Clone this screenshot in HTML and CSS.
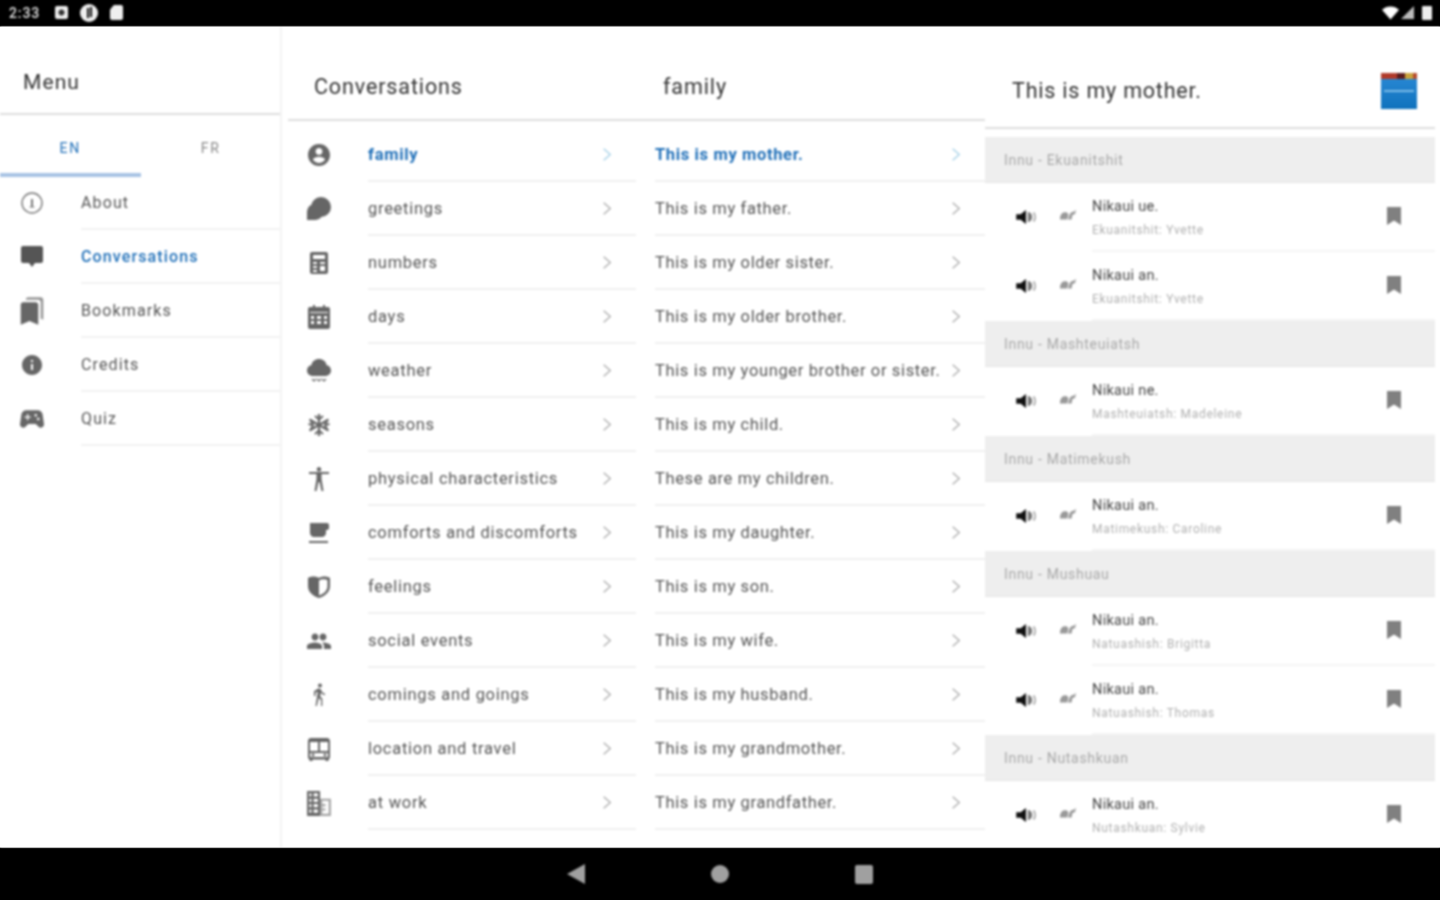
FILE: index.html
```html
<!DOCTYPE html>
<html lang="en">
<head>
<meta charset="utf-8">
<title>Innu Conversations</title>
<link rel="stylesheet" href="styles.css">
</head>
<body>
<svg class="defs" width="0" height="0" aria-hidden="true">
  <defs>
    <symbol id="i-about" viewBox="0 0 24 24"><circle cx="12" cy="12" r="10" fill="none" stroke="currentColor" stroke-width="1.4"/><path d="M11 8h2v8h-2zM9.500 15.500h5v1h-5z"/></symbol>
    <symbol id="i-chat" viewBox="0 0 24 24"><path d="M3 1h18c1.100 0 2 .9 2 2v13c0 1.100-.9 2-2 2h-6l-3 4-3-4H3c-1.100 0-2-.9-2-2V3c0-1.100.9-2 2-2z"/></symbol>
    <symbol id="i-bookmarks" viewBox="0 0 24 24"><path d="M19 18l2 1V3c0-1.100-.9-2-2-2H8.990C7.890 1 7 1.900 7 3h10c1.100 0 2 .9 2 2v13z" opacity=".7"/><path d="M15 5H5c-1.100 0-2 .9-2 2v16l7-3 7 3V7c0-1.100-.9-2-2-2z"/></symbol>
    <symbol id="i-info" viewBox="0 0 24 24"><path d="M12 2C6.480 2 2 6.480 2 12s4.480 10 10 10 10-4.480 10-10S17.520 2 12 2zm1 15h-2v-6h2v6zm0-8h-2V7h2v2z"/></symbol>
    <symbol id="i-game" viewBox="0 0 24 24"><path d="M21.580 16.090l-1.090-7.660C20.210 6.460 18.520 5 16.530 5H7.470C5.480 5 3.790 6.460 3.510 8.430l-1.090 7.660C2.200 17.630 3.390 19 4.940 19c.68 0 1.320-.27 1.800-.75L9 16h6l2.250 2.250c.48.48 1.130.75 1.800.75 1.560 0 2.750-1.370 2.530-2.910zM11 11H9v2H8v-2H6v-1h2V8h1v2h2v1zm4-1c-.55 0-1-.45-1-1s.45-1 1-1 1 .45 1 1-.45 1-1 1zm2 3c-.55 0-1-.45-1-1s.45-1 1-1 1 .45 1 1-.45 1-1 1z"/></symbol>
    <symbol id="i-account" viewBox="0 0 24 24"><path d="M12 1C5.900 1 1 5.900 1 12s4.900 11 11 11 11-4.900 11-11S18.100 1 12 1zm0 4c1.900 0 3.400 1.500 3.400 3.400s-1.500 3.400-3.400 3.400-3.400-1.500-3.400-3.400S10.100 5 12 5zm0 15c-2.500 0-4.710-1.280-6-3.220.03-1.990 4-3.080 6-3.080 1.990 0 5.970 1.090 6 3.080-1.290 1.940-3.500 3.220-6 3.220z"/></symbol>
    <symbol id="i-greet" viewBox="0 0 24 24"><circle cx="14" cy="10" r="10"/><path d="M0 23v-8c0-4.400 3.600-8 8-8s8 3.600 8 8-3.600 8-8 8H0z"/></symbol>
    <symbol id="i-calc" viewBox="0 0 24 24"><path d="M5 1h14c1.100 0 2 .9 2 2v18c0 1.100-.9 2-2 2H5c-1.100 0-2-.9-2-2V3c0-1.100.9-2 2-2zm1 3v4h12V4H6zm0 7v2h4v-2H6zm7 0v2h5v-2h-5zm-7 4v2h4v-2H6zm7 0v5h5v-5h-5zm-7 4v2h4v-2H6z"/></symbol>
    <symbol id="i-cal" viewBox="0 0 24 24"><path d="M6 0h2v2h8V0h2v2h3c1.100 0 2 .9 2 2v18c0 1.100-.9 2-2 2H3c-1.100 0-2-.9-2-2V4c0-1.100.9-2 2-2h3V0zM3 7v1h18V7H3zm1 4v3h3v-3H4zm6 0v3h4v-3h-4zm7 0v3h3v-3h-3zM4 16v3h3v-3H4zm6 0v3h4v-3h-4zm7 0v3h3v-3h-3z"/></symbol>
    <symbol id="i-weather" viewBox="0 0 24 24"><path d="M12 0C8 0 5 2.500 4.500 6 2 6.500 0 8.500 0 11.500 0 14.500 2.500 17 6 17h12c3.500 0 6-2.500 6-5.500 0-3-2-5-4.500-5.500C19 2.500 16 0 12 0z"/><path d="M5 20l2 2 2-2M10 20l2 2 2-2M15 20l2 2 2-2" fill="none" stroke="currentColor" stroke-width="1.200"/></symbol>
    <symbol id="i-snow" viewBox="0 0 24 24"><path d="M12 1v22M2.500 6.500l19 11M21.500 6.500l-19 11" fill="none" stroke="currentColor" stroke-width="2.200"/><path d="M8 3l4 3.500L16 3M8 21l4-3.500 4 3.500M1.500 11l4.500 1-2 4.500M22.500 11L18 12l2 4.500M4 7.500L6 12M20 7.500L18 12" fill="none" stroke="currentColor" stroke-width="2"/></symbol>
    <symbol id="i-body" viewBox="0 0 24 24"><path d="M12 0c1.300 0 2.300 1 2.300 2.300S13.300 4.600 12 4.600 9.700 3.600 9.700 2.300 10.700 0 12 0zm10 7h-7.500v5l2 12h-2l-2-9h-1l-2 9h-2l2-12V7H2V5h20v2z"/></symbol>
    <symbol id="i-cafe" viewBox="0 0 24 24"><path d="M20 2H3v10c0 2.210 1.790 4 4 4h8c2.210 0 4-1.790 4-4V9h1c1.110 0 2-.9 2-2V4c0-1.110-.89-2-2-2zM2 20h19v2H2z"/></symbol>
    <symbol id="i-shield" viewBox="0 0 24 24"><path d="M12 3C9 1 4 1 1 3v8c0 6 5 10 11 12 6-2 11-6 11-12V3c-3-2-8-2-11 0zm0 2.500c2-1.300 6-1.500 8.500-.5v6c0 4.500-3.700 8-8.500 9.500v-15z"/></symbol>
    <symbol id="i-people" viewBox="0 0 24 24"><path d="M16 11.500c1.900 0 3.400-1.500 3.400-3.500S17.900 4.500 16 4.500 12.600 6 12.600 8s1.500 3.500 3.400 3.500zm-8 0c1.900 0 3.400-1.500 3.400-3.500S9.900 4.500 8 4.500 4.600 6 4.600 8s1.500 3.500 3.400 3.500zm0 2c-2.330 0-8 1.170-8 3.500V20h15v-3c0-2.330-4.670-3.500-7-3.500zm8 0c-.29 0-.62.02-.97.05 1.160.84 1.970 1.970 1.970 3.450v3h7v-3c0-2.330-5.670-3.500-8-3.500z"/></symbol>
    <symbol id="i-walk" viewBox="0 0 24 24"><path d="M13 4.500c1.100 0 2-.9 2-2s-.9-2-2-2-2 .9-2 2 .9 2 2 2zM10.800 8.900L8.500 23h1.300l2.100-8 2.100 2v6h1.300v-7.500l-2.100-2 .6-4c.9 1.500 2.200 2.500 4.200 2.500v-1.500c-1.900 0-2.600-1-3.300-2.400l-1-1.600c-.4-.6-1-1-1.700-1-.3 0-.5.1-.8.1L7 8.300V13h1.500V9.600l2.300-.7z"/></symbol>
    <symbol id="i-bus" viewBox="0 0 24 24"><path d="M1 4c0-2 1.500-3 3-3h16c1.500 0 3 1 3 3v16c0 1.200-.6 2-1.500 2.400V24h-3v-1.400h-13V24h-3v-1.600C1.600 22 1 21.200 1 20V4zm2 1v9h8V5H3zm10 0v9h8V5h-8zM3 16v4h18v-4H3zm3 .6c.8 0 1.500.6 1.500 1.400s-.7 1.400-1.500 1.400-1.500-.6-1.500-1.400.7-1.400 1.500-1.400zm12 0c.8 0 1.500.6 1.500 1.400s-.7 1.400-1.500 1.400-1.500-.6-1.500-1.400.7-1.400 1.500-1.400z"/></symbol>
    <symbol id="i-work" viewBox="0 0 24 24"><path d="M13 8V1H1v23h12V8zM5 21H3v-3h2v3zm0-5H3v-3h2v3zm0-5H3V8h2v3zm0-5H3V3h2v3zm6 15H7v-3h4v3zm0-5H7v-3h4v3zm0-5H7V8h4v3zm0-5H7V3h4v3z"/><path d="M13 8v16h10V8H13zm8 14h-6v-3h3v-2h-3v-2h3v-2h-3v-3h6v12z" opacity=".6"/></symbol>
    <symbol id="i-chev" viewBox="0 0 12 16"><path d="M2 1l8 7-8 7" fill="none" stroke="currentColor" stroke-width="1.500"/></symbol>
    <symbol id="i-vol" viewBox="0 0 24 18"><path d="M1 6v6h5l6 5V1L6 6H1z" fill="#111"/><path d="M14 3c3.500 1 5 3.200 5 6s-1.500 5-5 6z" fill="#777"/><path d="M20.500 4c1.200 1.500 1.800 3.200 1.800 5s-.6 3.500-1.800 5" fill="none" stroke="#999" stroke-width="1.600"/></symbol>
    <symbol id="i-slow" viewBox="0 0 18 12"><path d="M0 11c0-5 2-8 6-8 3 0 4 2 3 5l-1 3H0zm9 0l2-6c1-2 3-3 5-3l2-2-1 5-3 1-1 5H9z"/></symbol>
    <symbol id="i-mark" viewBox="0 0 14 18"><path d="M0 0h14v18l-7-4.500L0 18z"/></symbol>
  </defs>
</svg>
<div class="device">
  <header class="statusbar">
    <div class="status-left">
      <span class="clock">2:33</span>
      <span class="st-square"></span>
      <span class="st-circle"></span>
      <span class="st-card"></span>
    </div>
    <div class="status-right">
      <svg class="st-wifi" viewBox="0 0 18 14"><path d="M0 3.500C2.500 1.300 5.500 0 9 0s6.500 1.300 9 3.500L9 14z"/></svg>
      <svg class="st-signal" viewBox="0 0 14 14"><path d="M14 0v14H0z"/></svg>
      <span class="st-battery"></span>
    </div>
  </header>
  <main class="screen">
    <nav class="menu">
      <h1 class="menu-title">Menu</h1>
      <div class="tabs"><span class="tab tab-on">EN</span><span class="tab">FR</span></div>
      <ul class="menu-list">
        <li class="menu-row"><svg class="ic ic-about"><use href="#i-about"/></svg><span class="menu-label">About</span></li>
        <li class="menu-row"><svg class="ic ic-chat"><use href="#i-chat"/></svg><span class="menu-label label-on">Conversations</span></li>
        <li class="menu-row"><svg class="ic ic-xl"><use href="#i-bookmarks"/></svg><span class="menu-label">Bookmarks</span></li>
        <li class="menu-row"><svg class="ic"><use href="#i-info"/></svg><span class="menu-label">Credits</span></li>
        <li class="menu-row"><svg class="ic ic-xl"><use href="#i-game"/></svg><span class="menu-label">Quiz</span></li>
      </ul>
    </nav>
    <section class="lists">
      <div class="list-head"><h2 class="list-title list-title-a">Conversations</h2><h2 class="list-title list-title-b">family</h2></div>
      <div class="columns">
        <ul class="col col-a">
          <li class="row"><svg class="ic"><use href="#i-account"/></svg><span class="row-body on">family<svg class="chev chev-on"><use href="#i-chev"/></svg></span></li>
          <li class="row"><svg class="ic"><use href="#i-greet"/></svg><span class="row-body">greetings<svg class="chev"><use href="#i-chev"/></svg></span></li>
          <li class="row"><svg class="ic"><use href="#i-calc"/></svg><span class="row-body">numbers<svg class="chev"><use href="#i-chev"/></svg></span></li>
          <li class="row"><svg class="ic"><use href="#i-cal"/></svg><span class="row-body">days<svg class="chev"><use href="#i-chev"/></svg></span></li>
          <li class="row"><svg class="ic"><use href="#i-weather"/></svg><span class="row-body">weather<svg class="chev"><use href="#i-chev"/></svg></span></li>
          <li class="row"><svg class="ic"><use href="#i-snow"/></svg><span class="row-body">seasons<svg class="chev"><use href="#i-chev"/></svg></span></li>
          <li class="row"><svg class="ic"><use href="#i-body"/></svg><span class="row-body">physical characteristics<svg class="chev"><use href="#i-chev"/></svg></span></li>
          <li class="row"><svg class="ic"><use href="#i-cafe"/></svg><span class="row-body">comforts and discomforts<svg class="chev"><use href="#i-chev"/></svg></span></li>
          <li class="row"><svg class="ic"><use href="#i-shield"/></svg><span class="row-body">feelings<svg class="chev"><use href="#i-chev"/></svg></span></li>
          <li class="row"><svg class="ic"><use href="#i-people"/></svg><span class="row-body">social events<svg class="chev"><use href="#i-chev"/></svg></span></li>
          <li class="row"><svg class="ic"><use href="#i-walk"/></svg><span class="row-body">comings and goings<svg class="chev"><use href="#i-chev"/></svg></span></li>
          <li class="row"><svg class="ic"><use href="#i-bus"/></svg><span class="row-body">location and travel<svg class="chev"><use href="#i-chev"/></svg></span></li>
          <li class="row"><svg class="ic ic-lg"><use href="#i-work"/></svg><span class="row-body">at work<svg class="chev"><use href="#i-chev"/></svg></span></li>
        </ul>
        <ul class="col col-b">
          <li class="row"><span class="row-body on">This is my mother.<svg class="chev chev-on"><use href="#i-chev"/></svg></span></li>
          <li class="row"><span class="row-body">This is my father.<svg class="chev"><use href="#i-chev"/></svg></span></li>
          <li class="row"><span class="row-body">This is my older sister.<svg class="chev"><use href="#i-chev"/></svg></span></li>
          <li class="row"><span class="row-body">This is my older brother.<svg class="chev"><use href="#i-chev"/></svg></span></li>
          <li class="row"><span class="row-body">This is my younger brother or sister.<svg class="chev"><use href="#i-chev"/></svg></span></li>
          <li class="row"><span class="row-body">This is my child.<svg class="chev"><use href="#i-chev"/></svg></span></li>
          <li class="row"><span class="row-body">These are my children.<svg class="chev"><use href="#i-chev"/></svg></span></li>
          <li class="row"><span class="row-body">This is my daughter.<svg class="chev"><use href="#i-chev"/></svg></span></li>
          <li class="row"><span class="row-body">This is my son.<svg class="chev"><use href="#i-chev"/></svg></span></li>
          <li class="row"><span class="row-body">This is my wife.<svg class="chev"><use href="#i-chev"/></svg></span></li>
          <li class="row"><span class="row-body">This is my husband.<svg class="chev"><use href="#i-chev"/></svg></span></li>
          <li class="row"><span class="row-body">This is my grandmother.<svg class="chev"><use href="#i-chev"/></svg></span></li>
          <li class="row"><span class="row-body">This is my grandfather.<svg class="chev"><use href="#i-chev"/></svg></span></li>
        </ul>
      </div>
    </section>
    <section class="detail">
      <div class="detail-head">
        <h2 class="detail-title">This is my mother.</h2>
        <div class="book">
          <div class="book-top"><i class="bt-a"></i><i class="bt-b"></i><i class="bt-c"></i><i class="bt-d"></i></div>
          <div class="book-line"></div>
        </div>
      </div>
      <div class="detail-body">
        <h3 class="group">Innu - Ekuanitshit</h3>
        <div class="say"><svg class="vol"><use href="#i-vol"/></svg><svg class="slow"><use href="#i-slow"/></svg><div class="say-text"><p class="say-main">Nikaui ue.</p><p class="say-sub">Ekuanitshit: Yvette</p></div><svg class="mark"><use href="#i-mark"/></svg></div>
        <div class="say"><svg class="vol"><use href="#i-vol"/></svg><svg class="slow"><use href="#i-slow"/></svg><div class="say-text"><p class="say-main">Nikaui an.</p><p class="say-sub">Ekuanitshit: Yvette</p></div><svg class="mark"><use href="#i-mark"/></svg></div>
        <h3 class="group">Innu - Mashteuiatsh</h3>
        <div class="say"><svg class="vol"><use href="#i-vol"/></svg><svg class="slow"><use href="#i-slow"/></svg><div class="say-text"><p class="say-main">Nikaui ne.</p><p class="say-sub">Mashteuiatsh: Madeleine</p></div><svg class="mark"><use href="#i-mark"/></svg></div>
        <h3 class="group">Innu - Matimekush</h3>
        <div class="say"><svg class="vol"><use href="#i-vol"/></svg><svg class="slow"><use href="#i-slow"/></svg><div class="say-text"><p class="say-main">Nikaui an.</p><p class="say-sub">Matimekush: Caroline</p></div><svg class="mark"><use href="#i-mark"/></svg></div>
        <h3 class="group">Innu - Mushuau</h3>
        <div class="say"><svg class="vol"><use href="#i-vol"/></svg><svg class="slow"><use href="#i-slow"/></svg><div class="say-text"><p class="say-main">Nikaui an.</p><p class="say-sub">Natuashish: Brigitta</p></div><svg class="mark"><use href="#i-mark"/></svg></div>
        <div class="say"><svg class="vol"><use href="#i-vol"/></svg><svg class="slow"><use href="#i-slow"/></svg><div class="say-text"><p class="say-main">Nikaui an.</p><p class="say-sub">Natuashish: Thomas</p></div><svg class="mark"><use href="#i-mark"/></svg></div>
        <h3 class="group">Innu - Nutashkuan</h3>
        <div class="say"><svg class="vol"><use href="#i-vol"/></svg><svg class="slow"><use href="#i-slow"/></svg><div class="say-text"><p class="say-main">Nikaui an.</p><p class="say-sub">Nutashkuan: Sylvie</p></div><svg class="mark"><use href="#i-mark"/></svg></div>
      </div>
    </section>
  </main>
  <footer class="navbar">
    <svg class="nav-back" viewBox="0 0 18 20"><path d="M0 10L18 0v20z"/></svg>
    <span class="nav-home"></span>
    <span class="nav-recent"></span>
  </footer>
</div>
</body>
</html>
```

FILE: styles.css
```css
* { box-sizing: border-box; }
html, body { margin: 0; padding: 0; height: 100%; overflow: hidden; background: #fff; }
body { font-family: Roboto, "Liberation Sans", sans-serif; color: #555; }
h1, h2, h3, p, ul { margin: 0; padding: 0; font-weight: 400; }
ul { list-style: none; }
.defs { display: block; height: 0; }
.device { display: flex; flex-direction: column; height: 900px; width: 1440px; }
.screen, .status-left, .status-right, .navbar > * { filter: blur(0.8px); }

.statusbar { flex: 0 0 27px; background: #000; border-bottom: 1px solid #666; display: flex; justify-content: space-between; align-items: center; padding: 0 8px 1px 9px; }
.status-left, .status-right { display: flex; align-items: center; }
.clock { color: #e4e4e4; font-size: 14px; font-weight: 500; width: 46px; letter-spacing: 0.9px; }
.st-square { width: 13px; height: 13px; background: radial-gradient(circle, #333 0 2.5px, #eee 3.5px); border-radius: 2px; margin-right: 12px; }
.st-circle { width: 18px; height: 18px; background: #eee; border-radius: 50%; margin-right: 12px; position: relative; }
.st-circle::after { content: ""; position: absolute; left: 7px; top: 4px; width: 2px; height: 10px; background: #111; box-shadow: 3px -1px 0 #111; }
.st-card { width: 13px; height: 15px; background: #eee; border-radius: 2px; clip-path: polygon(30% 0, 100% 0, 100% 100%, 0 100%, 0 30%); }
.st-wifi { width: 17px; height: 14px; fill: #fff; margin-right: 2px; }
.st-signal { width: 13px; height: 13px; fill: #bbb; margin-right: 8px; }
.st-battery { width: 10px; height: 14px; background: #eee; border-radius: 1px; }

.screen { flex: 0 0 820px; display: flex; overflow: hidden; background: #fff; }

.ic { width: 24px; height: 24px; fill: #666; color: #666; flex: none; }
.ic-lg { width: 26px; height: 26px; margin: 0 -1px; }
.ic-xl { width: 30px; height: 30px; margin: 0 -3px; }
.ic-chat { fill: #555; }
.ic-about { fill: #777; color: #777; }

.menu { flex: 0 0 288px; width: 288px; position: relative; }
.menu::after { content: ""; position: absolute; left: 280px; top: 0; bottom: 0; width: 2px; background: #f3f3f3; }
.menu-title { height: 88px; border-bottom: 2px solid #ddd; width: 281px; padding: 41px 0 0 23px; font-size: 21px; line-height: 28px; color: #333; letter-spacing: 1.100px; }
.tabs { display: flex; width: 281px; height: 62px; }
.tab { flex: 1; display: flex; justify-content: center; align-items: flex-start; padding-top: 24px; font-size: 14px; line-height: 18px; font-weight: 400; letter-spacing: 1.800px; color: #888; }
.tab-on { color: #1f6fb8; border-bottom: 4px solid #a8c3e4; }
.menu-list { width: 281px; margin-top: -1px; }
.menu-row { height: 54px; display: flex; align-items: center; padding-left: 20px; }
.menu-label { margin-left: 37px; flex: 1; height: 54px; display: flex; align-items: center; border-bottom: 2px solid #f2f2f2; font-size: 16px; color: #555; letter-spacing: 1.120px; }
.label-on { color: #1f6fb8; font-weight: 500; letter-spacing: 1.120px; }

.lists { flex: 0 0 697px; display: flex; flex-direction: column; }
.list-head { height: 94px; border-bottom: 2px solid #ddd; display: flex; padding-top: 46px; flex: none; }
.list-title { font-size: 21.500px; line-height: 28px; color: #333; letter-spacing: 0.880px; }
.list-title-a { width: 375px; padding-left: 26px; }
.columns { display: flex; padding-top: 7px; }
.col-a { width: 348px; }
.col-a .row { padding-left: 19px; }
.col-a .row-body { margin-left: 37px; letter-spacing: 0.720px; }
.col-b { width: 349px; padding-left: 19px; }
.row { height: 54px; display: flex; align-items: center; }
.row-body { flex: 1; height: 54px; display: flex; align-items: center; justify-content: space-between; border-bottom: 2px solid #f0f0f0; font-size: 16.500px; color: #555; padding-right: 24px; letter-spacing: 0.640px; }
.row-body.on { color: #1f6fb8; font-weight: 700; }
.chev { width: 10px; height: 15px; color: #aaa; flex: none; }
.chev-on { color: #a3cfe6; }

.detail { flex: 1; display: flex; flex-direction: column; padding-right: 5px; }
.detail-head { height: 102px; border-bottom: 2px solid #ddd; flex: none; display: flex; justify-content: space-between; align-items: flex-start; padding: 46px 18px 0 27px; }
.detail-title { font-size: 21.500px; line-height: 36px; color: #333; font-weight: 400; letter-spacing: 0.800px; }
.book { width: 36px; height: 36px; background: linear-gradient(#2b8ad6, #0f72bd); display: flex; flex-direction: column; }
.book-top { display: flex; height: 6px; flex: none; }
.bt-a { flex: 4; background: #b03a2a; }
.bt-b { flex: 2; background: #5c1c1c; }
.bt-c { flex: 2; background: #c9a23c; }
.bt-d { flex: 1; background: #b64a2c; }
.book-line { margin: 11px 3px 0; height: 2px; background: #7cbce8; }
.detail-body { padding-top: 8px; }
.group { height: 46px; background: #eee; display: flex; align-items: center; padding: 0 19px; font-size: 14px; color: #a8a8a8; border-bottom: 1px solid #e6e6e6; letter-spacing: 0.700px; }
.say { height: 69px; display: flex; align-items: center; position: relative; }
.vol { width: 22px; height: 16px; margin-left: 30px; margin-top: -1px; flex: none; }
.slow { width: 16px; height: 12px; margin-left: 23px; margin-top: -5px; fill: #999; flex: none; }
.say-text { position: absolute; left: 107px; right: 0; top: 0; bottom: 0; border-bottom: 2px solid #f4f4f4; padding-top: 15px; }
.say-main { font-size: 14.500px; line-height: 18px; color: #444; letter-spacing: 0.300px; }
.say-sub { font-size: 12px; line-height: 16px; color: #b0b0b0; margin-top: 6px; letter-spacing: 0.700px; }
.mark { width: 14px; height: 18px; fill: #808080; margin-left: auto; margin-right: 34px; margin-top: -4px; flex: none; position: relative; z-index: 1; }

.navbar { flex: 0 0 53px; background: #000; border-top: 1px solid #999; display: flex; align-items: center; justify-content: center; }
.nav-back { width: 18px; height: 20px; fill: #a0a0a0; margin-right: 126px; }
.nav-home { width: 18px; height: 18px; border-radius: 50%; background: #a0a0a0; margin-right: 126px; }
.nav-recent { width: 18px; height: 19px; border-radius: 2px; background: #a0a0a0; }
```
